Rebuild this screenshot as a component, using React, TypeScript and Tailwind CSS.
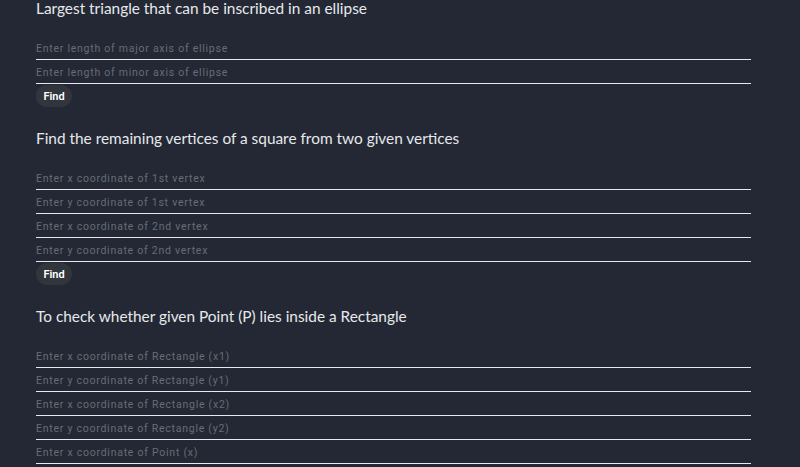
import React from "react"

type Section = {
    title: string
    fields: string[]
}

const sections: Section[] = [
    {
        title: "Largest triangle that can be inscribed in an ellipse",
        fields: ["Enter length of major axis of ellipse", "Enter length of minor axis of ellipse"],
    },
    {
        title: "Find the remaining vertices of a square from two given vertices",
        fields: [
            "Enter x coordinate of 1st vertex",
            "Enter y coordinate of 1st vertex",
            "Enter x coordinate of 2nd vertex",
            "Enter y coordinate of 2nd vertex",
        ],
    },
    {
        title: "To check whether given Point (P) lies inside a Rectangle",
        fields: [
            "Enter x coordinate of Rectangle (x1)",
            "Enter y coordinate of Rectangle (y1)",
            "Enter x coordinate of Rectangle (x2)",
            "Enter y coordinate of Rectangle (y2)",
            "Enter x coordinate of Point (x)",
            "Enter y coordinate of Point (y)",
        ],
    },
]

function Field({ placeholder }: { placeholder: string }) {
    return (
        <input
            type="text"
            placeholder={placeholder}
            className="block w-full h-[24px] pt-[2px] bg-transparent border-b border-[#e6e8eb] outline-none text-[10.5px] tracking-[0.75px] text-[#c8ccd2] placeholder:text-[#686c74] font-['Roboto',sans-serif]"
        />
    )
}

export default function App() {
    return (
        <div className="h-[467px] bg-[#232834] overflow-hidden">
            <div className="pl-[36px] w-[751px] -mt-[5px]">
                {sections.map((s, i) => (
                    <section key={i} className="pb-[18px]">
                        <h2 className="h-[24px] leading-[26px] text-[15.4px] text-[#e6e8eb] font-['Lato',sans-serif] mb-[17px]">
                            {s.title}
                        </h2>
                        {s.fields.map((f) => (
                            <Field key={f} placeholder={f} />
                        ))}
                        {i < 2 && (
                            <button className="block mt-[1px] h-[22px] w-[36px] rounded-full bg-[#31353c] text-white text-[11px] leading-[23px] font-semibold font-['Roboto',sans-serif]">
                                Find
                            </button>
                        )}
                    </section>
                ))}
            </div>
        </div>
    )
}
